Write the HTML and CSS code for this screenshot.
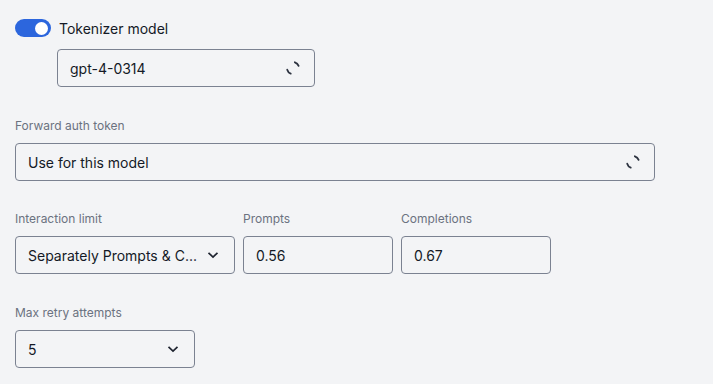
FILE: index.html
```html
<!DOCTYPE html>
<html>
<head>
<meta charset="utf-8">
<link rel="stylesheet" href="styles.css">
</head>
<body>
<div class="form">
  <div class="toggle-row">
    <span class="toggle"><span class="knob"></span></span>
    <span class="toggle-label">Tokenizer model</span>
  </div>
  <div class="box model-box">
    <span class="value">gpt-4-0314</span>
    <svg class="spinner" width="16" height="16" viewBox="0 0 16 16"><circle cx="8" cy="8" r="6" fill="none" stroke="#2d3340" stroke-width="1.8" stroke-linecap="round" stroke-dasharray="5.2 13.65" transform="rotate(-72 8 8)"/></svg>
  </div>

  <div class="field auth">
    <label class="label">Forward auth token</label>
    <div class="box wide-box">
      <span class="value">Use for this model</span>
      <svg class="spinner" width="16" height="16" viewBox="0 0 16 16"><circle cx="8" cy="8" r="6" fill="none" stroke="#2d3340" stroke-width="1.8" stroke-linecap="round" stroke-dasharray="5.2 13.65" transform="rotate(-72 8 8)"/></svg>
    </div>
  </div>

  <div class="row">
    <div class="field">
      <label class="label">Interaction limit</label>
      <div class="box limit-box">
        <span class="value">Separately Prompts &amp; C...</span>
        <svg class="chev" width="12" height="8" viewBox="0 0 12 8"><path d="M1.5 1.8 L6 6 L10.5 1.8" fill="none" stroke="#1f2430" stroke-width="1.7"/></svg>
      </div>
    </div>
    <div class="field">
      <label class="label">Prompts</label>
      <div class="box num-box"><span class="value">0.56</span></div>
    </div>
    <div class="field">
      <label class="label">Completions</label>
      <div class="box num-box"><span class="value">0.67</span></div>
    </div>
  </div>

  <div class="field retry">
    <label class="label">Max retry attempts</label>
    <div class="box retry-box">
      <span class="value">5</span>
      <svg class="chev" width="12" height="8" viewBox="0 0 12 8"><path d="M1.5 1.8 L6 6 L10.5 1.8" fill="none" stroke="#1f2430" stroke-width="1.7"/></svg>
    </div>
  </div>
</div>
</body>
</html>
```

FILE: styles.css
```css
html, body {
  margin: 0;
  padding: 0;
  background: #f3f4f6;
}
body {
  font-family: Inter, "Noto Sans", sans-serif;
  color: #141a26;
}
.form {
  padding: 18px 15px 0 15px;
  display: flex;
  flex-direction: column;
}
.toggle-row {
  display: flex;
  align-items: center;
  gap: 8px;
  height: 20px;
}
.toggle {
  width: 36px;
  height: 18px;
  border-radius: 9px;
  background: #2c66dd;
  display: flex;
  align-items: center;
  justify-content: flex-end;
  padding: 0 3px;
  box-sizing: border-box;
}
.knob {
  width: 13px;
  height: 13px;
  border-radius: 50%;
  background: #ffffff;
}
.toggle-label {
  font-size: 14px;
  color: #141a26;
}
.box {
  height: 38px;
  box-sizing: border-box;
  border: 1px solid #7b8291;
  border-radius: 4px;
  display: flex;
  align-items: center;
  justify-content: space-between;
  padding: 0 13px 0 12px;
  font-size: 14px;
}
.value {
  white-space: nowrap;
}
.model-box {
  margin-top: 11px;
  margin-left: 42px;
  width: 258px;
}
.spinner {
  display: block;
}
.field {
  display: flex;
  flex-direction: column;
}
.label {
  font-size: 12px;
  line-height: 16px;
  color: #6b7280;
  margin-bottom: 9px;
}
.auth {
  margin-top: 31px;
}
.wide-box {
  width: 640px;
}
.row {
  display: flex;
  gap: 8px;
  margin-top: 30px;
}
.limit-box {
  width: 220px;
  padding-right: 15px;
}
.num-box {
  width: 150px;
}
.chev {
  display: block;
}
.retry {
  margin-top: 31px;
}
.retry-box {
  width: 180px;
  padding-right: 15px;
}
```
